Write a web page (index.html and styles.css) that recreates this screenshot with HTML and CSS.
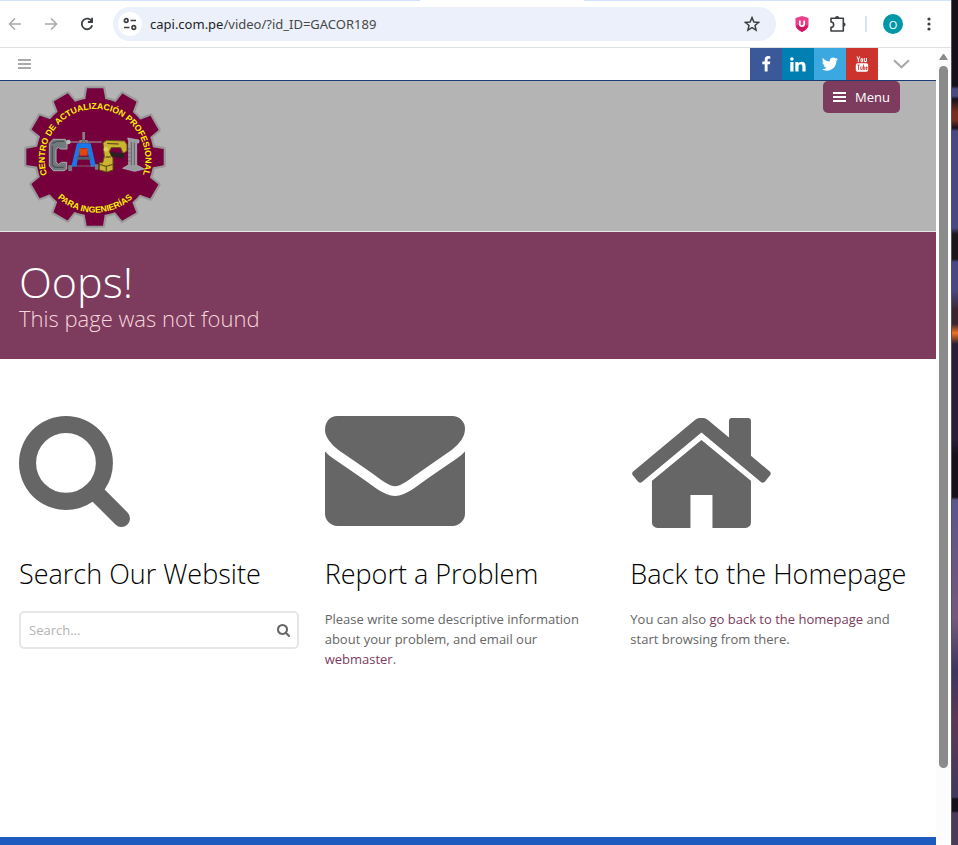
FILE: index.html
```
<!DOCTYPE html>
<html lang="es">
<head>
	<meta charset="utf-8">
	<title>Oops! - CAPI</title>
	<meta name="viewport" content="width=device-width, initial-scale=1">
	<link rel="stylesheet" href="styles.css">
</head>
<body>
	<div class="browser">
		<div class="tabstrip"><span class="active-tab"></span></div>
		<div class="toolbar">
			<button class="tool" aria-label="Back"><svg width="14" height="14" viewBox="0 0 14 14" fill="none" stroke="#a9abae" stroke-width="1.6"><path d="M13 7H2M7 1.500L1.500 7L7 12.500"/></svg></button>
			<button class="tool" aria-label="Forward"><svg width="14" height="14" viewBox="0 0 14 14" fill="none" stroke="#a9abae" stroke-width="1.6"><path d="M1 7H12M7 1.500L12.500 7L7 12.500"/></svg></button>
			<button class="tool" aria-label="Reload"><svg width="14" height="14" viewBox="0 0 14 14" fill="none" stroke="#3c4043" stroke-width="1.8"><path d="M11.800 4.500A5.300 5.300 0 1 0 12.200 8.300"/><path d="M12.100 .8V5H7.900"/></svg></button>
			<div class="omnibox">
				<button class="site-info" aria-label="Site information"><svg width="14" height="14" viewBox="0 0 14 14" fill="none" stroke="#3c4043" stroke-width="1.7"><circle cx="3.200" cy="3.500" r="1.800"/><path d="M7.500 3.500H13M1 10.500H6.500"/><circle cx="10.800" cy="10.500" r="1.800"/></svg></button>
				<span class="url"><b>capi.com.pe</b>/video/?id_ID=GACOR189</span>
				<button class="star" aria-label="Bookmark"><svg width="16" height="16" viewBox="0 0 16 16" fill="none" stroke="#3c4043" stroke-width="1.5"><path d="M8 1.600L9.900 6L14.600 6.400L11 9.500L12.100 14.100L8 11.600L3.900 14.100L5 9.500L1.400 6.400L6.100 6Z"/></svg></button>
			</div>
			<button class="ext" aria-label="Shield extension"><svg width="14" height="16" viewBox="0 0 14 16"><path d="M7 0L13.500 2V9Q13.500 13 7 16Q.5 13 .5 9V2Z" fill="#e8408b"/><path d="M.8 9.500H13.200Q12.500 13.200 7 16Q1.500 13.200 .8 9.500Z" fill="#cf1763"/><path d="M4.800 4.500V8A2.200 2.200 0 0 0 9.200 8V4.500" fill="none" stroke="#fff" stroke-width="1.700"/></svg></button>
			<button class="ext" aria-label="Extensions"><svg width="18" height="18" viewBox="0 0 18 18" fill="none" stroke="#3c4043" stroke-width="1.600"><path d="M2 3.300H14.300V16H2V12.300A2.500 2.500 0 0 0 2 7Z" stroke-linejoin="round"/><path d="M6 3A2.100 2.100 0 0 1 10.200 3ZM14.500 7.500A2.100 2.100 0 0 1 14.500 11.700Z" fill="#3c4043" stroke="none"/></svg></button>
			<span class="divider"></span>
			<button class="avatar" aria-label="Profile">O</button>
			<button class="dots" aria-label="More"><svg width="4" height="14" viewBox="0 0 4 14" fill="#3c4043"><circle cx="2" cy="2" r="1.600"/><circle cx="2" cy="7" r="1.600"/><circle cx="2" cy="12" r="1.600"/></svg></button>
		</div>

		<div class="viewport">
			<div class="page">
				<div class="topbar">
					<button class="burger" aria-label="Open top menu"><svg width="13" height="11" viewBox="0 0 13 11" fill="#aaa"><path d="M0 0H13V2H0ZM0 4H13V6H0ZM0 8H13V10H0Z"/></svg></button>
					<div class="social">
						<a href="#" class="facebook" aria-label="Facebook"><svg width="9" height="16" viewBox="0 0 9 16" fill="#fff"><path d="M8.300 .2V2.800H6.800Q5.600 2.800 5.600 4V5.600H8.300L7.900 8.300H5.600V15.500H2.700V8.300H.3V5.600H2.700V3.500Q2.700 0 6.200 0Q7.600 0 8.300 .2Z"/></svg></a>
						<a href="#" class="linkedin" aria-label="LinkedIn"><svg width="16" height="15" viewBox="0 0 16 15" fill="#fff"><path d="M.3 5H3.500V14.500H.3ZM5.300 5H8.400V6.300Q9.400 4.800 11.400 4.800Q15.600 4.800 15.600 9.200V14.500H12.400V9.500Q12.400 7.300 10.600 7.300Q8.500 7.300 8.500 9.600V14.500H5.300Z"/><circle cx="1.900" cy="2" r="1.800"/></svg></a>
						<a href="#" class="twitter" aria-label="Twitter"><svg width="16" height="14" viewBox="0 0 1556 1264" fill="#fff"><path d="M1556 150q-67 98-162 167 1 14 1 42 0 130-38 259.500t-115.500 248.500-184.500 210.500-258 146-323 54.500q-271 0-496-145 35 4 78 4 225 0 401-138-105-2-188-64.500t-114-159.500q33 5 61 5 43 0 85-11-112-23-185.500-111.500t-73.500-205.500v-4q68 38 146 41-66-44-105-115t-39-154q0-88 44-163 121 149 294.500 238.500t371.500 99.500q-8-38-8-74 0-134 94.500-228.500t228.500-94.500q140 0 236 102 109-21 205-78-37 115-142 178 93-10 186-50z"/></svg></a>
						<a href="#" class="youtube" aria-label="YouTube"><svg width="14" height="16" viewBox="0 0 14 16"><path d="M2 .4L3.300 3.800V6M4.700 .4L3.400 3.800M6 2.800H7.600V5.700H6ZM9.300 2V5.600H11.400V2" fill="none" stroke="#fff"/><rect x=".8" y="7.200" width="12.400" height="8.600" rx="1.800" fill="#fff"/><path d="M2.200 9H4.800M3.500 9V14M5.700 10.500V13.500H7.200V10.500M8.500 8.500V13.500H9.700V11H8.500M12.300 13.500H11V11H12.200V12.200H11" fill="none" stroke="#cd332d" stroke-width=".8"/></svg></a>
					</div>
					<button class="chevron" aria-label="More links"><svg width="17" height="10" viewBox="0 0 17 10" fill="none" stroke="#aaa" stroke-width="2.200"><path d="M1 1.200L8.500 8.200L16 1.200"/></svg></button>
				</div>

				<header class="header">
					<a href="#" class="logo" aria-label="CAPI">
						<svg width="152" height="150" viewBox="14 3 456 450">
							<defs>
								<path id="tooth" d="M212 64L218 25H267L274 64Z"/>
								<g id="gear">
									<circle cx="242" cy="231" r="176"/>
									<use href="#tooth"/>
									<use href="#tooth" transform="rotate(30 242 231)"/>
									<use href="#tooth" transform="rotate(60 242 231)"/>
									<use href="#tooth" transform="rotate(90 242 231)"/>
									<use href="#tooth" transform="rotate(120 242 231)"/>
									<use href="#tooth" transform="rotate(150 242 231)"/>
									<use href="#tooth" transform="rotate(180 242 231)"/>
									<use href="#tooth" transform="rotate(210 242 231)"/>
									<use href="#tooth" transform="rotate(240 242 231)"/>
									<use href="#tooth" transform="rotate(270 242 231)"/>
									<use href="#tooth" transform="rotate(300 242 231)"/>
									<use href="#tooth" transform="rotate(330 242 231)"/>
								</g>
								<path id="arc-top" d="M123 331A151 151 0 1 1 361 331"/>
								<path id="arc-bottom" d="M107 329A167 167 0 0 0 377 329"/>
							</defs>
							<use href="#gear" fill="#999" stroke="#999" stroke-width="13" stroke-linejoin="round"/>
							<use href="#gear" fill="#75003c"/>
							<!-- C: clamp -->
							<path d="M116 178H153L158 188V207H138L133 202L125 208V246L133 253L141 247H157V267L149 272H117L105 258V190Z" fill="#737a7e" stroke="#a5adb0" stroke-width="3"/>
							<path d="M114 190L128 184H149M114 197V255L122 262H148" fill="none" stroke="#4b5356" stroke-width="4"/>
							<!-- A: press -->
							<path d="M160 186H262" stroke="#a3a6a8" stroke-width="3"/>
							<circle cx="162" cy="186" r="7" fill="#b8b8b8"/>
							<path d="M204 156H212V180H220V190H195V180H204Z" fill="#8d8180"/>
							<path d="M193 205L208 178L224 205" fill="none" stroke="#555b60" stroke-width="3"/>
							<path d="M188 190H229L245 260H230L216 207H198L186 260H171Z" fill="#1878e8"/>
							<path d="M199 204H217L228 252H188Z" fill="#75003c"/>
							<rect x="195" y="205" width="25" height="22" fill="#dc4712"/>
							<path d="M187 230H229V239H187Z" fill="#53606b"/>
							<path d="M163 257H172V272H163ZM243 254H251V268H243ZM185 258H237" fill="#777" stroke="#8b8b8b" stroke-width="2"/>
							<!-- P: robot arm -->
							<path d="M266 188L277 181L331 183L338 194V213L326 220L319 203H291L285 215L296 235V270L278 276L255 270V248H265L270 230Z" fill="#cbb431" stroke="#615117" stroke-width="3"/>
							<path d="M288 216L329 220V236L306 232L290 229Z" fill="#292125"/>
							<path d="M278 190L313 192M274 231H289M256 253L275 259L296 253M276 259V275" fill="none" stroke="#6b5a17" stroke-width="4"/>
							<circle cx="275" cy="208" r="7" fill="#e3cf53"/>
							<!-- I: steel beam -->
							<path d="M340 174L374 180V188L367 190V255L390 267L361 274L325 265L343 254V184Z" fill="#999da1" stroke="#bcc0c3" stroke-width="2"/>
							<path d="M351 186V256M360 188V255M342 207H348M342 219H348M342 231H348M342 243H348" stroke="#606468" stroke-width="3"/>
							<text class="ring-text"><textPath href="#arc-top" startOffset="50%">CENTRO DE ACTUALIZACIÓN PROFESIONAL</textPath></text>
							<text class="ring-text"><textPath href="#arc-bottom" startOffset="50%">PARA INGENIERÍAS</textPath></text>
						</svg>
					</a>
					<button class="menu-btn"><svg width="13" height="11" viewBox="0 0 13 11" fill="#fff"><path d="M0 0H13V2H0ZM0 4H13V6H0ZM0 8H13V10H0Z"/></svg>Menu</button>
				</header>

				<div class="banner">
					<h1>Oops!</h1>
					<p>This page was not found</p>
				</div>

				<main class="columns">
					<section>
						<div class="icon"><svg width="111" height="111" viewBox="0 128 1664 1664"><path d="M1152 832q0-185-131.500-316.500t-316.500-131.500-316.500 131.500-131.500 316.500 131.500 316.500 316.500 131.500 316.500-131.500 131.500-316.500zm512 832q0 52-38 90t-90 38q-54 0-90-38l-343-342q-179 124-399 124-143 0-273.500-55.500t-225-150-150-225-55.500-273.500 55.500-273.500 150-225 225-150 273.500-55.500 273.500 55.500 225 150 150 225 55.500 273.500q0 220-124 399l343 343q37 37 37 90z"/></svg></div>
						<h2>Search Our Website</h2>
						<form class="search">
							<input type="text" placeholder="Search..." aria-label="Search">
							<button type="button" aria-label="Search"><svg width="13" height="13" viewBox="0 128 1664 1664"><path d="M1152 832q0-185-131.500-316.500t-316.500-131.500-316.500 131.500-131.500 316.500 131.500 316.500 316.500 131.500 316.500-131.500 131.500-316.500zm512 832q0 52-38 90t-90 38q-54 0-90-38l-343-342q-179 124-399 124-143 0-273.500-55.500t-225-150-150-225-55.500-273.500 55.500-273.500 150-225 225-150 273.500-55.500 273.500 55.500 225 150 150 225 55.500 273.500q0 220-124 399l343 343q37 37 37 90z"/></svg></button>
						</form>
					</section>
					<section>
						<div class="icon"><svg width="140" height="110" viewBox="0 256 1792 1408"><path d="M1792 710v794q0 66-47 113t-113 47h-1472q-66 0-113-47t-47-113v-794q44 49 101 87 362 246 497 345 57 42 92.500 65.500t94.500 48 110 24.500h2q51 0 110-24.500t94.500-48 92.500-65.500q170-123 498-345 57-39 100-87zm0-294q0 79-49 151t-122 123q-376 261-468 325-10 7-42.500 31t-54 38.800-52 33-57.500 27-50 9h-2q-23 0-50-9t-57.500-27-52-33-54-38.800-42.500-31q-91-64-262-182.500t-205-142.500q-62-42-117-115.500t-55-136.500q0-78 41.500-130t118.500-52h1472q65 0 112.500 47t47.500 113z"/></svg></div>
						<h2>Report a Problem</h2>
						<p>Please write some descriptive information about your problem, and email our <a href="#">webmaster</a>.</p>
					</section>
					<section>
						<div class="icon home"><svg width="139" height="110" viewBox="25 256 1615 1280"><path d="M1408 992v480q0 26-19 45t-45 19h-384v-384h-256v384h-384q-26 0-45-19t-19-45v-480q0-1 .5-3t.5-3l575-474 575 474q1 2 1 6zm223-69l-62 74q-8 9-21 11h-3q-13 0-21-7l-692-577-692 577q-12 8-24 7-13-2-21-11l-62-74q-8-10-7-23.500t11-21.500l719-599q32-26 76-26t76 26l244 204v-195q0-14 9-23t23-9h192q14 0 23 9t9 23v408l219 182q10 8 11 21.500t-7 23.500z"/></svg></div>
						<h2>Back to the Homepage</h2>
						<p>You can also <a href="#">go back to the homepage</a> and start browsing from there.</p>
					</section>
				</main>

				<footer class="footer"></footer>
			</div>
			<div class="scrollbar">
				<svg width="9" height="8" viewBox="0 0 9 8"><path d="M4.500 1L8.300 6.500H.7Z" fill="#8b8b8b" stroke="#8b8b8b" stroke-linejoin="round"/></svg>
				<div class="thumb"></div>
			</div>
		</div>
	</div>
	<div class="desktop"></div>
</body>
</html>
```
FILE: styles.css
```
*{
	margin:0;
	padding:0;
	box-sizing:border-box;
}
body{
	display:flex;
	min-height:100vh;
	font-family:"Open Sans", sans-serif;
	font-size:13px;
	line-height:20px;
	color:#666;
	background-color:#fff;
}
button{
	display:flex;
	align-items:center;
	justify-content:center;
	flex:none;
	border:none;
	background:none;
	font-family:inherit;
	cursor:pointer;
}
svg{
	display:block;
	flex:none;
}
a{
	color:#7d3b5d;
	text-decoration:none;
}

/* browser window */
.browser{
	flex:1;
	display:flex;
	flex-direction:column;
	min-width:0;
}
.tabstrip{
	height:1px;
	background-color:#d3e3fd;
	display:flex;
	justify-content:center;
	padding-left:52px;
}
.active-tab{
	width:164px;
	background-color:#fff;
}
.toolbar{
	height:47px;
	display:flex;
	align-items:center;
	padding:0 20px 0 8px;
	border-bottom:1px solid #dfe0e2;
}
.tool{
	width:14px;
	margin-right:22px;
}
.omnibox{
	flex:1;
	height:34px;
	margin-left:-3px;
	margin-right:17px;
	padding:0 16px 0 5px;
	display:flex;
	align-items:center;
	border-radius:17px;
	background-color:#ebf0fa;
}
.site-info{
	width:24px;
	height:24px;
	border-radius:50%;
	background-color:#fff;
}
.url{
	flex:1;
	margin-left:8px;
	font-family:"Noto Sans", sans-serif;
	font-size:13px;
	color:#474747;
}
.url b{
	font-weight:400;
	color:#1f1f1f;
}
.ext{
	width:18px;
	margin-right:18px;
}
.divider{
	width:2px;
	height:16px;
	background-color:#d3e3fd;
}
.avatar{
	width:20px;
	height:20px;
	margin:0 24px 0 16px;
	border-radius:50%;
	background-color:#0097a7;
	color:#fff;
	font-size:11px;
}
.viewport{
	flex:1;
	display:flex;
}
.page{
	flex:1;
	display:flex;
	flex-direction:column;
	min-width:0;
}
.scrollbar{
	width:15px;
	padding:5px 3px 77px;
	background-color:#fcfcfc;
	display:flex;
	flex-direction:column;
	align-items:center;
}
.thumb{
	flex:1;
	width:9px;
	margin-top:5px;
	border-radius:5px;
	background-color:#8b8b8b;
}
.desktop{
	width:7px;
	border-left:1px solid #555;
	background:linear-gradient(#17101c 0, #17101c 86px, #4a4883 89px, #4a4883 96px, #17101c 99px, #7a2e20 112px, #7a2e20 120px, #17101c 128px, #4a4883 131px, #4a4883 228px, #1d141c 234px, #1d141c 259px, #4a4883 262px, #4a4883 290px, #3a2430 310px, #3a2430 324px, #f07420 333px, #2a1d35 344px, #2a1d35 440px, #17101c 455px, #17101c 497px, #5b568a 500px, #74587c 620px, #3d3560 670px, #5c3854 720px, #41395e 797px, #17101c 799px, #17101c 811px, #4b3a58 813px);
}

/* site */
.topbar{
	height:33px;
	display:flex;
	align-items:center;
	padding:0 26px 0 18px;
	border-bottom:1px solid #1a3a78;
}
.social{
	display:flex;
	margin-left:auto;
	margin-right:15px;
}
.social a{
	width:32px;
	height:32px;
	display:flex;
	align-items:center;
	justify-content:center;
}
.facebook{
	background-color:#3b5998;
}
.linkedin{
	background-color:#0080b2;
}
.twitter{
	background-color:#3ba9e0;
}
.youtube{
	background-color:#cd332d;
}
.header{
	display:flex;
	justify-content:space-between;
	align-items:flex-start;
	padding:0 36px 0 19px;
	background-color:#b4b4b4;
	border-bottom:1px solid #e6e6e6;
}
.ring-text{
	font-family:"Liberation Sans", Arial, sans-serif;
	font-weight:700;
	font-size:26px;
	text-anchor:middle;
	fill:#fff200;
}
.menu-btn{
	height:32px;
	padding:0 10px;
	gap:9px;
	border-radius:5px;
	background-color:#7d3b5d;
	color:#fff;
	font-size:13px;
}
.banner{
	padding:27px 19px;
	background-color:#7d3b5d;
	color:#fff;
}
.banner h1{
	font-size:43px;
	font-weight:300;
	line-height:46px;
}
.banner p{
	font-size:22px;
	font-weight:300;
	line-height:27px;
	color:#f6d5dc;
}
.columns{
	flex:1;
	display:grid;
	grid-template-columns:repeat(3, 1fr);
	gap:26px;
	padding:57px 26px 57px 19px;
}
.icon{
	height:112px;
	margin-bottom:28px;
	fill:#666;
}
.home{
	padding:2px;
}
h2{
	margin-bottom:17px;
	font-size:27px;
	font-weight:300;
	line-height:36px;
	color:#000;
	white-space:nowrap;
}
.search{
	display:flex;
	align-items:center;
	height:38px;
	margin-top:19px;
	padding:0 7px;
	border:2px solid #e6e6e6;
	border-radius:5px;
}
.search input{
	flex:1;
	min-width:0;
	padding-left:1px;
	border:none;
	outline:none;
	font-family:inherit;
	font-size:13px;
	color:#666;
}
.search input::placeholder{
	color:#b3b3b3;
}
.search svg{
	fill:#666;
}
.footer{
	height:8px;
	background-color:#1d5bbf;
}
```
